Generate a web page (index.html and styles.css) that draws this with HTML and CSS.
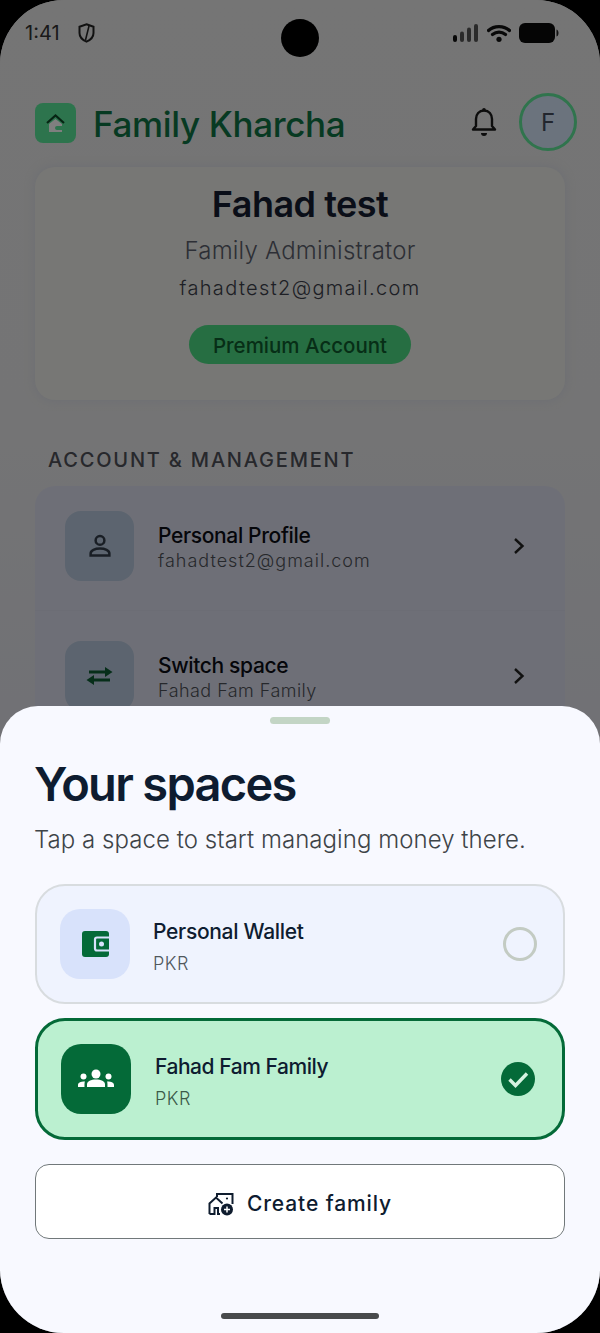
FILE: index.html
```html
<!DOCTYPE html>
<html lang="en">
<head>
<meta charset="utf-8">
<title>Family Kharcha</title>
<link rel="stylesheet" href="styles.css">
</head>
<body>
<div class="screen">
  <div class="page">
    <div class="status">
      <span class="time">1:41</span>
      <svg class="shield" viewBox="0 0 17 20" width="17" height="20"><path d="M8.500 1.200 15.500 3.800v6.200c0 4-3 7-7 8.700C4.500 17 1.500 14 1.500 10V3.800Z" fill="none" stroke="#222" stroke-width="2"/><path d="M11 3 7.500 17" stroke="#222" stroke-width="1.600"/></svg>
      <span class="status-gap"></span>
      <svg class="signal" viewBox="0 0 26 18" width="26" height="18"><rect x="0" y="11" width="4" height="7" rx="2" fill="#111"/><rect x="7" y="7.500" width="4" height="10.500" rx="2" fill="#555"/><rect x="14" y="3.500" width="4" height="14.500" rx="2" fill="#555"/><rect x="21" y="0" width="4" height="18" rx="2" fill="#555"/></svg>
      <svg class="wifi" viewBox="0 0 24 18" width="24" height="18"><path d="M1.500 6.500C7 1.200 17 1.200 22.500 6.500M5.500 10.500c3.800-3.200 9.200-3.200 13 0" fill="none" stroke="#111" stroke-width="3.200" stroke-linecap="round"/><circle cx="12" cy="15.300" r="2.600" fill="#111"/></svg>
      <svg class="battery" viewBox="0 0 40 20" width="40" height="20"><rect x="0" y="0" width="36" height="20" rx="6" fill="#0a0a0a"/><path d="M37.500 6.500c1.500.5 2 2 2 3.500s-.5 3-2 3.500Z" fill="#222"/></svg>
    </div>
    <header class="app-bar">
      <div class="logo">
        <svg viewBox="0 0 41 40" width="41" height="40"><path d="M12 20 20.500 12.500 29 20" fill="none" stroke="#0c4a27" stroke-width="2.200"/><path d="M14 21 20.500 16 27 21v2h-5a2 2 0 0 0 0 4h5v2H14Z" fill="#fff"/></svg>
      </div>
      <span class="brand">Family Kharcha</span>
      <svg class="bell" viewBox="0 0 26 30" width="26" height="30"><path d="M13 3.500c-5 0-8 3.800-8 8.500v7l-3 3.500h22L21 19v-7c0-4.700-3-8.500-8-8.500Z" fill="none" stroke="#1a1a1a" stroke-width="2.400" stroke-linejoin="round"/><circle cx="13" cy="2.800" r="1.800" fill="#1a1a1a"/><path d="M10 26h6a3 3 0 0 1-6 0Z" fill="#1a1a1a"/></svg>
      <div class="avatar">F</div>
    </header>
    <main class="content">
      <section class="profile-card">
        <h1 class="name">Fahad test</h1>
        <p class="role">Family Administrator</p>
        <p class="email">fahadtest2@gmail.com</p>
        <span class="pill">Premium Account</span>
      </section>
      <h2 class="section-label">ACCOUNT &amp; MANAGEMENT</h2>
      <section class="menu">
        <div class="menu-row first">
          <div class="menu-icon">
            <svg viewBox="0 0 24 24" width="30" height="30"><circle cx="12" cy="7.500" r="3.500" fill="none" stroke="#333d4a" stroke-width="2"/><path d="M4.500 19.500v-1.500c0-2.500 3.500-4 7.500-4s7.500 1.500 7.500 4v1.500Z" fill="none" stroke="#333d4a" stroke-width="2"/></svg>
          </div>
          <div class="menu-text"><span class="menu-title">Personal Profile</span><span class="menu-sub spaced">fahadtest2@gmail.com</span></div>
          <svg class="chevron" viewBox="0 0 12 18" width="12" height="18"><path d="M2 2l7.500 7L2 16" fill="none" stroke="#222" stroke-width="2.400"/></svg>
        </div>
        <div class="menu-row second">
          <div class="menu-icon">
            <svg viewBox="0 0 27 20" width="27" height="20"><path d="M3 6h18M24 14H6" fill="none" stroke="#0d5c33" stroke-width="3"/><path d="M19 1l7.500 5-7.500 5ZM8 9l-7.500 5 7.500 5Z" fill="#0d5c33"/></svg>
          </div>
          <div class="menu-text"><span class="menu-title">Switch space</span><span class="menu-sub">Fahad Fam Family</span></div>
          <svg class="chevron" viewBox="0 0 12 18" width="12" height="18"><path d="M2 2l7.500 7L2 16" fill="none" stroke="#222" stroke-width="2.400"/></svg>
        </div>
      </section>
    </main>
  </div>
  <div class="scrim"></div>
  <section class="sheet">
    <div class="handle"></div>
    <h2 class="sheet-title">Your spaces</h2>
    <p class="sheet-sub">Tap a space to start managing money there.</p>
    <div class="space">
      <div class="space-icon">
        <svg viewBox="0 0 27 26" width="27" height="26"><rect x="0" y="0" width="27" height="26" rx="3" fill="#046a38"/><path d="M27 6.500H15a2 2 0 0 0-2 2v9a2 2 0 0 0 2 2h12" fill="none" stroke="#d8e2fb" stroke-width="2.200"/><circle cx="19.500" cy="13" r="2.500" fill="#d8e2fb"/></svg>
      </div>
      <div class="space-text"><span class="space-title">Personal Wallet</span><span class="space-cur">PKR</span></div>
      <span class="radio"></span>
    </div>
    <div class="space active">
      <div class="space-icon">
        <svg viewBox="0 0 36 20" width="36" height="20"><circle cx="18" cy="5" r="4.500" fill="#fff"/><circle cx="5.500" cy="7.500" r="3" fill="#fff"/><circle cx="30.500" cy="7.500" r="3" fill="#fff"/><path d="M9 18v-2.500C9 12 13 10.500 18 10.500s9 1.500 9 5V18Z" fill="#fff"/><path d="M0 18v-2c0-2 2-3.500 7-3.500-.5 1-.5 2-.5 5.500ZM36 18v-2c0-2-2-3.500-7-3.500 .5 1 .5 2 .5 5.500Z" fill="#fff"/></svg>
      </div>
      <div class="space-text"><span class="space-title">Fahad Fam Family</span><span class="space-cur">PKR</span></div>
      <span class="check">
        <svg viewBox="0 0 34 34" width="34" height="34"><path d="M8.500 17.500l6 6L26 11.500" fill="none" stroke="#d5f3e0" stroke-width="3.400"/></svg>
      </span>
    </div>
    <button class="create" type="button">
      <svg viewBox="0 0 26 24" width="26" height="24"><path d="M1.500 22V11.500L8 5.500l6.500 6M4.500 22v0M1.500 22h5v-6h3.500v6h2" fill="none" stroke="#0f1c2e" stroke-width="2"/><path d="M9 5V2h15.500v10" fill="none" stroke="#0f1c2e" stroke-width="2"/><circle cx="19" cy="6.500" r="1.100" fill="#0f1c2e"/><circle cx="19" cy="17.500" r="6" fill="#0f1c2e"/><path d="M19 14.500v6M16 17.500h6" stroke="#fff" stroke-width="1.500"/></svg>
      <span>Create family</span>
    </button>
    <div class="home-bar"></div>
  </section>
</div>
</body>
</html>
```
FILE: styles.css
```css
* { box-sizing: border-box; }
html, body { margin: 0; padding: 0; background: #000; }
body { font-family: "Inter", "Noto Sans", "Liberation Sans", sans-serif; }
h1, h2, p { margin: 0; font-weight: inherit; }

.screen {
  position: relative;
  width: 600px;
  height: 1333px;
  overflow: hidden;
  background: linear-gradient(#eaeaea 0, #e9e9ea 400px, #e2e3ea 700px);
  border-radius: 64px;
}
.scrim { position: absolute; inset: 0; background: rgba(0, 0, 0, 0.5); }

.status {
  display: flex;
  align-items: center;
  height: 66px;
  padding: 0 41px 0 25px;
}
.time { font-size: 20px; color: #333; width: 53px; }
.status-gap { flex: 1; }
.signal { margin-right: 8px; }
.wifi { margin-right: 8px; }
.status::after {
  content: "";
  position: absolute;
  left: 281px;
  top: 19px;
  width: 38px;
  height: 38px;
  border-radius: 50%;
  background: #000;
  z-index: 5;
}

.app-bar {
  display: flex;
  align-items: center;
  height: 60px;
  margin-top: 26px;
  padding: 0 23px 0 35px;
}
.logo { width: 41px; height: 40px; border-radius: 8px; background: #5ae89a; margin-right: 18px; margin-top: 2px; }
.logo svg { display: block; }
.brand { flex: 1; font-size: 35px; font-weight: 500; color: #0f7445; letter-spacing: -0.35px; margin-top: 4px; margin-left: -1px; }
.bell { margin-right: 22px; }
.avatar {
  width: 58px;
  height: 58px;
  border-radius: 50%;
  border: 3px solid #60e89a;
  background: #d6e6fa;
  color: #444c5c;
  font-size: 24px;
  display: flex;
  align-items: center;
  justify-content: center;
}

.content { padding: 15px 35px 0; }
.profile-card {
  height: 233px;
  border-radius: 20px;
  background: #eeeeea;
  display: flex;
  flex-direction: column;
  align-items: center;
  padding-top: 15px;
  box-shadow: 0 0 10px rgba(200, 205, 225, 0.5);
}
.name { font-size: 36px; line-height: 44px; font-weight: 600; color: #141c30; letter-spacing: -0.5px; }
.role { font-size: 24px; line-height: 28px; margin-top: 11px; color: #5a5e6c; font-weight: 300; letter-spacing: 0.2px; }
.email { font-size: 20px; line-height: 26px; margin-top: 10px; color: #3c3f4a; font-weight: 300; letter-spacing: 1.35px; }
.pill {
  margin-top: 24px;
  width: 222px;
  height: 39px;
  border-radius: 20px;
  background: #4cdc84;
  color: #0e5c2e;
  font-size: 20.5px;
  font-weight: 500;
  line-height: 41px;
  text-align: center;
}
.section-label { margin: 47px 0 0 13px; font-size: 20px; line-height: 26px; font-weight: 500; color: #4e5058; letter-spacing: 1.8px; }
.menu { margin-top: 13px; border-radius: 20px; background: #dddfee; height: 260px; }
.menu-row { display: flex; align-items: center; padding: 0 40px 0 30px; }
.menu-row.first { height: 125px; padding-bottom: 5px; border-bottom: 1px solid #d8daea; }
.menu-row.second { height: 130px; }
.menu-icon {
  width: 69px;
  height: 70px;
  border-radius: 16px;
  background: #b8c9de;
  display: flex;
  align-items: center;
  justify-content: center;
  margin-right: 24px;
}
.menu-text { flex: 1; display: flex; flex-direction: column; padding-top: 4px; }
.menu-title { font-size: 21px; line-height: 26px; font-weight: 500; color: #0a0c14; letter-spacing: -0.35px; }
.menu-sub { font-size: 18px; line-height: 24px; color: #4d5158; font-weight: 300; letter-spacing: 0.45px; }
.menu-sub.spaced { letter-spacing: 1px; }

.sheet {
  position: absolute;
  left: 0;
  right: 0;
  bottom: 0;
  height: 627px;
  padding: 0 35px;
  background: #f8f9ff;
  border-radius: 38px 38px 0 0;
  display: flex;
  flex-direction: column;
}
.handle { align-self: center; width: 60px; height: 7px; margin-top: 11px; border-radius: 4px; background: #c3d5c5; }
.sheet-title { font-size: 47px; line-height: 56px; margin-top: 32px; font-weight: 600; color: #0e1c30; letter-spacing: -1.7px; margin-left: -1px; }
.sheet-sub { font-size: 24px; line-height: 32px; margin-top: 12px; font-weight: 300; color: #3e4448; letter-spacing: 0.05px; margin-left: -1px; }
.space {
  display: flex;
  align-items: center;
  height: 120px;
  margin-top: 28px;
  padding: 0 26px 0 23px;
  border: 2px solid #d8dcdf;
  border-radius: 30px;
  background: #eff3fe;
}
.space.active { height: 122px; margin-top: 14px; padding: 0 27px 0 23px; border: 3px solid #046a38; background: #bbf0d0; }
.space-icon {
  width: 70px;
  height: 70px;
  border-radius: 20px;
  background: #d8e2fb;
  display: flex;
  align-items: center;
  justify-content: center;
  margin-right: 23px;
}
.active .space-icon { background: #046a38; margin-right: 24px; }
.space-text { flex: 1; display: flex; flex-direction: column; padding-top: 6px; }
.space-title { font-size: 21px; line-height: 28px; font-weight: 500; color: #0e1c30; letter-spacing: -0.3px; }
.active .space-title { letter-spacing: -0.45px; }
.space-cur { font-size: 18px; line-height: 24px; margin-top: 6px; color: #50575c; font-weight: 300; letter-spacing: 0.5px; }
.active .space-cur { color: #3c5a48; }
.radio { width: 34px; height: 34px; border-radius: 50%; border: 3px solid #c3cbc3; }
.check { width: 34px; height: 34px; border-radius: 50%; background: #046a38; }
.check svg { display: block; }
.create {
  display: flex;
  align-items: center;
  justify-content: center;
  gap: 13px;
  height: 75px;
  margin-top: 24px;
  padding-top: 5px;
  border: 1.5px solid #71787a;
  border-radius: 14px;
  background: #fff;
  color: #0e1c30;
  font-family: inherit;
  font-size: 21px;
  font-weight: 500;
  letter-spacing: 0.9px;
}
.home-bar { position: absolute; left: 221px; bottom: 14px; width: 158px; height: 6px; border-radius: 3px; background: #484a4c; }
```
